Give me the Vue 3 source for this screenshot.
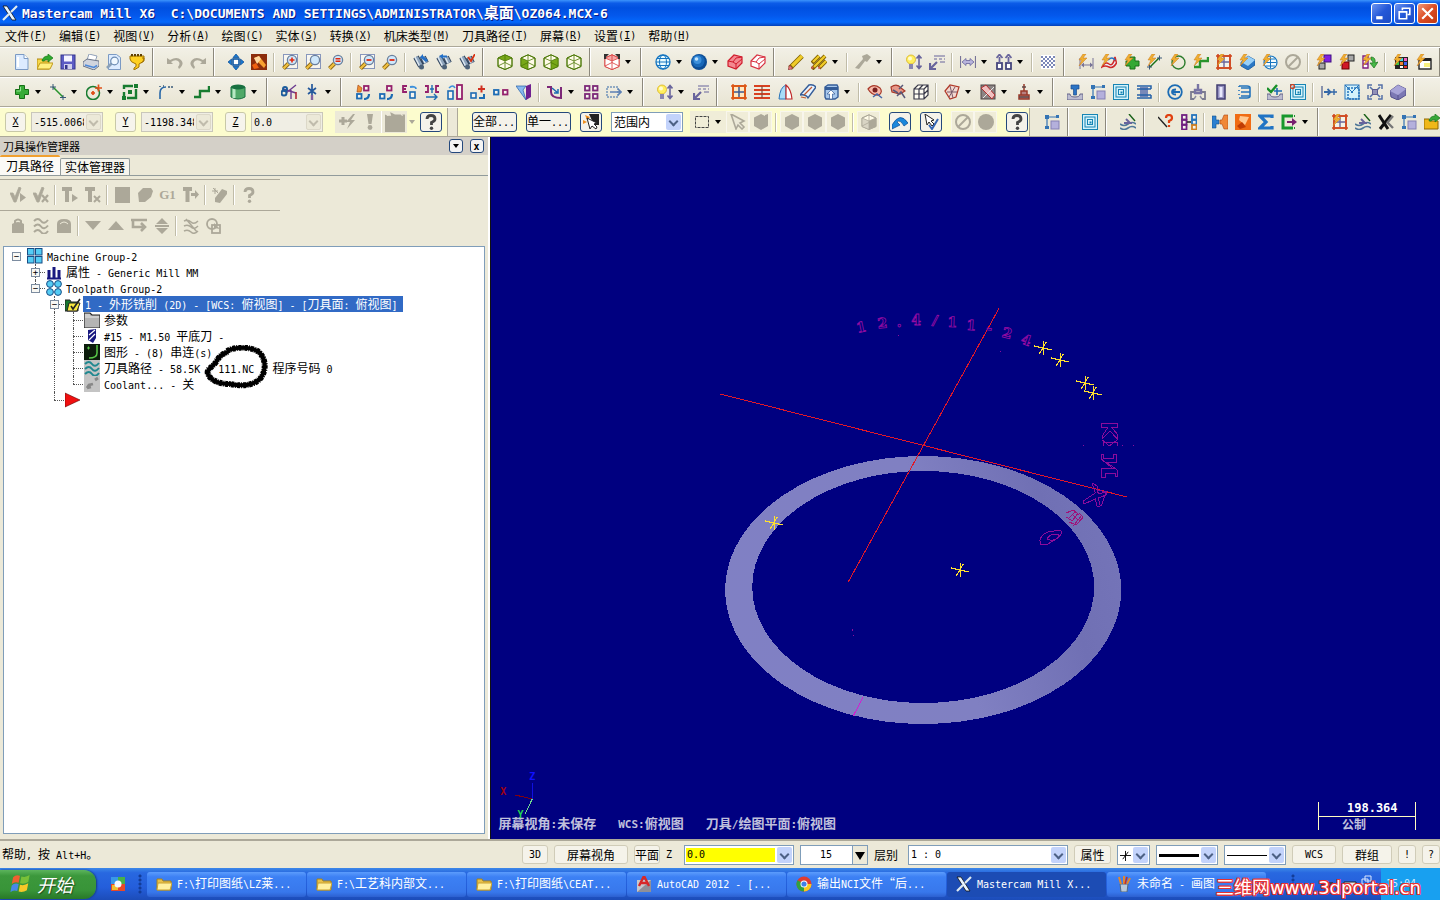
<script setup>
import { h } from 'vue'

// Mixed-script text: CJK at full size, Latin runs in a narrower monospaced face.
const T = ({ s }) =>
  h('span', { class: 'mixed' }, (s.match(/[\x20-\x7e]+|[^\x20-\x7e]+/g) || []).map(run =>
    h('span', { class: run.charCodeAt(0) < 127 ? 'lat' : 'cjk' }, run)))
T.props = ['s']

const p = (d, f = 'none', s = 'none', w = 1) => `<path d="${d}" fill="${f}" stroke="${s}" stroke-width="${w}"/>`
const c = (x, y, r, f = 'none', s = 'none', w = 1) => `<circle cx="${x}" cy="${y}" r="${r}" fill="${f}" stroke="${s}" stroke-width="${w}"/>`
const r = (x, y, w, ht, f = 'none', s = 'none', sw = 1) => `<rect x="${x}" y="${y}" width="${w}" height="${ht}" fill="${f}" stroke="${s}" stroke-width="${sw}"/>`

const GREY = '#aca899'
const bolt = p('M5 0L1 6h3L1 12l8-8H5l3-4z', '#f0b030', '#c87820', 0.5)
const mag = (sign, box) =>
  (box ? `<rect x="1.5" y=".5" width="14" height="14" fill="#fff8" stroke="#1c3c90" stroke-dasharray="1 1"/>` : '') +
  p('M6.5 9.5L1.5 14.5', 'none', '#8a6410', 4) + p('M6.5 9.5L1.5 14.5', 'none', '#f0c040', 2.4) +
  c(10, 6, 4.6, '#cfe8fb', '#6a7f9c', 1.3) +
  ({ plus: p('M7.5 6h5M10 3.5v5', 'none', '#e02810', 1.6), eq: p('M7.5 4.8h5M7.5 7.2h5', 'none', '#e02810', 1.4), minus: p('M7.5 6h5', 'none', '#e02810', 1.8) }[sign] || '')
const bino = extra =>
  p('M3 3l5 9M10 3l3 6', 'none', '#33465e', 6) + p('M3 3l5 9M10 3l3 6', 'none', '#8fa5bd', 4) + p('M2 3l4.500 9M9 3l3 6', 'none', '#dfe9f2', 1.4) + c(8.500, 13, 2.500, '#4c6178') + extra
const cube = (t, l, rt, s, base = '#fffbe8') =>
  p('M8 .8L15 4v8.5L8 15.5 1 12.500V4z', base, s) + (t ? p('M8 .8L15 4 8 7 1 4z', t) : '') + (l ? p('M1 4l7 3v8.500l-7-3z', l) : '') +
  (rt ? p('M15 4L8 7v8.500l7-3z', rt) : '') + p('M8 .8L15 4v8.500L8 15.500 1 12.500V4zM1 4l7 3 7-3M8 7v8.500M8 1v6M1 12l7-3.500 7 3.500', 'none', s, 0.8)
const hex = p('M8 0l7 3.500v8.500L8 16l-7-4V3.500z', GREY)
const nested = r(0.5, 0.5, 15, 15, '#d4f2fa', '#1684b4') + r(3, 3, 10, 10, 'none', '#1684b4') + r(5.500, 5.500, 5, 5, 'none', '#1684b4') + r(7.500, 7.500, 2, 2, '#1684b4')
const sq2 = (x, y, s) => r(x, y, 4.500, 4.500, '#fff8', s, 1.8)
const grid = (s, n = 1.6) => r(2, 2, 12, 12, '#fff6', s, n) + p('M0 2h16M0 14h16M2 0v16M14 0v16', 'none', s, n) + p('M8 3v10M3 8h10', 'none', '#68649c', 1.4)
const bed = p('M0 10h3q0 3 5 3t5-3h3v6H0z', '#bcbcd0', '#66668a')
const arrowUp = p('M13 2v12M10.500 4.500L13 1.500l2.500 3M10.500 11.500l2.500 3 2.500-3', 'none', '#68649c', 1.6)
const bulb = c(5, 5.500, 4.500, '#ffef60', '#d8b020', 0.8) + c(4, 4.500, 2, '#fffbd0') + r(3, 10, 4, 5, '#8a86b0')
const rect2 = p('M3 3h10M3 3v11', 'none', '#3474b4', 1.2) + r(1, 1, 4, 4, '#3474b4') + r(1, 12, 4, 3, '#3474b4') + r(12, 1, 3, 3, '#3474b4') + r(7, 7, 8, 8, '#b4b0dc', '#8480b4')
const helpMark = col => p('M4 5Q4 1.500 8 1.500T12 5Q12 7 8.500 8.500V11', 'none', col, 2.8) + c(8.500, 14.200, 1.700, col)

const I = {
  new: p('M1.500.5h8.500l4 4v11H1.500z', '#dcebff', '#7b9ac4') + p('M10 .5v4h4', '#fff', '#7b9ac4') + p('M4 3v10', 'none', '#fff', 2),
  open: p('M0 5h5l1 2h6v8H0z', '#f8d848', '#b08810') + p('M3 9h13l-3 6H0z', '#fff080', '#c09818') + p('M5 7Q6 2 11 2V0l5 4-5 4V5.500Q8 5.500 7 7z', '#2ea82e', '#187818', 0.7),
  save: r(1, 1, 14, 14, '#5c5cc4', '#34348c') + r(4, 1.500, 8, 6, '#f4f4ff') + r(4, 10, 8, 5, '#d0d0ec') + r(5, 11, 2.500, 4, '#34348c'),
  print: p('M4 6l2-6 8 2-2 6z', '#fff', '#90a0b8') + p('M0 8l4-3 12 2v5l-5 4L0 12z', '#d0d4de', '#6a7488') + p('M2 11l9 2.500 3-2', 'none', '#4c88d8', 1.6),
  preview: p('M2.500.5h8l4 3v12h-12z', '#dcebff', '#7b9ac4') + p('M6 9l-5 5', 'none', '#8aa0b8', 2.600) + c(8.500, 7, 3.800, '#f0f8ff', '#6c8cb4', 1.2),
  cup: p('M1 2h14v3q0 3-5 5v3l-5 3v-2l2-1.500V10Q1 8 1 5z', '#ffd020', '#a07000') + `<path d="M2 1h12" stroke="#604000" stroke-width="2.400" stroke-dasharray="2 1"/>` + p('M13 4h2v3l-3 2', 'none', '#a07000'),
  undo: p('M0 4v6h6L4 8q4-3 7-1t0 6l1 2q6-5 2-9T3 6z', GREY),
  redo: p('M16 4v6h-6l2-2Q8 5 5 7t0 6l-1 2q-6-5-2-9t11 0z', GREY),
  fit: r(5, 5, 6, 6, '#fff', '#0c56a4', 1.6) + p('M8 0l3 3.500H5zM8 16l3-3.500H5zM0 8l3.500-3v6zM16 8l-3.500-3v6z', '#1878d0', '#0a4a94', 0.7),
  repaint: r(0, 0, 16, 16, '#8c2c0c') + p('M3 4l5-2 7 9-2 3z', '#f8a030') + p('M3 4l5-2 2 3-4 5z', '#ffd8a0') + p('M1 11l4-2 3 5-5 1z', '#f06010'),
  zw: mag('plus', 1), zb: mag('', 1), zt: mag('eq'), zo: mag('minus', 1), zoo: mag('minus'),
  b1: bino(p('M7 3l3-3v2l5 4-2 2-5-4H7z', '#2470c8')), b2: bino(p('M3 2l4-2v1.500h4v2H7V5z', '#2470c8')), b3: bino(p('M9 3l3 4 4-7', 'none', '#d83010', 1.800)),
  cTop: cube('#78a818', '', '', '#4c7808'), cFront: cube('', '#78a818', '', '#4c7808'), cRight: cube('', '', '#78a818', '#4c7808'), cIso: cube('', '', '', '#4c7808'),
  gview: cube('#f4a8a8', '#fff', '#fff', '#d83838') + p('M0 0h5L2 3v2H0zM16 0h-5l3 3v2h2z', '#303030'),
  globe: c(8, 8, 7, '#e8fbff', '#1474c0', 1.300) + `<ellipse cx="8" cy="8" rx="3.500" ry="7" fill="none" stroke="#1474c0"/>` + p('M1 8h14M2 4.500h12M2 11.500h12', 'none', '#1474c0'),
  sphere: c(8, 8, 8, '#0c4c94') + c(7.300, 7, 6.300, '#1868b8') + c(6.500, 6, 4, '#3c90dc') + c(5.500, 5, 1.800, '#c4e4fc'),
  redBox: p('M1 7l6-6 8 2v6l-6 6-8-3z', '#f48890', '#d01c2c', 1.200) + p('M1 7l5 1 3-4 6-1M6 8l3 2v5M9 10l6-5', 'none', '#d01c2c'),
  wireBox: p('M1 7l6-6 8 2v6l-6 6-8-3z', '#fff', '#d83040', 1.200) + p('M1 7l5 1 3-4 6-1M6 8l3 2v5M9 10l6-5', 'none', '#d83040'),
  pencil: p('M2 14L14 2', 'none', '#806000', 5) + p('M4 12L14 2', 'none', '#f0cc28', 3.200) + p('M0 16l5-1.500-3.500-3.500z', '#e87878', '#803030', 0.6),
  pencils: p('M1 9l7-7M8 14l7-7M1 15L14 2', 'none', '#806000', 4) + p('M2 8l6-6M9 13l6-6M3 13L14 2', 'none', '#f0cc28', 2.400) + p('M0 15l3-1-2-2zM7 15l3-1-2-2z', '#d85858'),
  greyTool: p('M0 14l8-9-1-3 5-2 4 3-4 5-2-1-6 8z', GREY),
  lamp: bulb + arrowUp,
  dash: p('M1 15L8 8M1 9v6h6', 'none', '#68649c', 2.2) + p('M5 2h11M5 5h3m2 0h3m2 0h1M11 8h5', 'none', '#68649c', 1.200),
  dim: p('M.5 2v12M15.500 2v12', 'none', '#787498', 1.2) + p('M2 8l4-3.500v2h4v-2L14 8l-4 3.500v-2H6v2z', '#b8b4dc', '#68649c', 0.8),
  upup: r(1, 9, 5, 6, '#fff', '#45457c', 1.800) + r(10, 9, 5, 6, '#fff', '#45457c', 1.800) + p('M3.500 9V3M.5 4l3-3.500 3 3.500M12.500 9V3M9.500 4l3-3.500 3 3.500', 'none', '#68649c', 1.800),
  check: r(1, 1, 14, 14, '#fff') + `<path d="M1 3h14M1 7h14M1 11h14" stroke="#7c88b8" stroke-width="2" stroke-dasharray="2 2"/><path d="M3 5h12M3 9h12M3 13h12" stroke="#7c88b8" stroke-width="2" stroke-dasharray="2 2"/>`,
  bDim: p('M2 4v11M15 4v11', 'none', '#787498') + p('M3 11l3-2.500v2h6v-2L15 11l-3 2.500v-2H6v2z', '#787498') + bolt,
  bSurf: p('M1 13Q4 7 8 10t6-7l1.500 6Q12 15 8 13t-7 0z', '#e8f4ff', '#d02828', 1.500) + p('M7 6q4-4 7 0', 'none', '#2874c4', 1.500) + bolt,
  bPlus: p('M6 3h5v4h4v5h-4v3H6v-3H2V7h4z', '#34a834', '#187018') + bolt,
  bLine: p('M3 13L12 4', 'none', '#187018', 1.5) + p('M10 4h5M12.500 1.500v5M0 13h5M2.500 10.500v5', 'none', '#385878', 1) + bolt,
  bCirc: c(8.500, 8.500, 6.500, 'none', '#2c7c2c', 1.400) + bolt,
  bSpl: p('M1 13h6V7h8V3', 'none', '#28942c', 2.400) + bolt,
  bGrid: grid('#d04820') + bolt,
  bBox: p('M2 8l7-6 7 4v5l-7 5-7-4z', '#2c78c4', '#14589c', 0.8) + p('M2 8l7-6 7 4-7 6z', '#98d0f8') + bolt,
  bGlobe: c(8.500, 8.500, 6.500, '#f0fbff', '#1474c0', 1.200) + p('M2.500 8.500h12M8.500 2.500v12M4 5h9M4 12h9', 'none', '#1474c0') + bolt,
  no: c(8, 8, 7, 'none', GREY, 2) + p('M3 13L13 3', 'none', GREY, 2),
  col1: r(8, 1, 7, 7, '#8020e0', '#401080') + r(3, 9, 6, 6, '#a8a8a8', '#222') + bolt,
  col2: r(9, 1, 6, 6, '#a8a8a8', '#222') + r(3, 8, 7, 7, '#d01828', '#600') + bolt,
  col3: p('M1 2h5v12H1zM1 6h5M1 10h5', '#fff', '#802080', 1.400) + p('M9 3q5 0 4 6l3-1-4 6-4-5h3q0-3-2-3z', '#48b848', '#187018', 0.7) + bolt,
  tiles: r(2, 3, 13, 12, '#222') + r(3, 4, 3, 3, '#f8f060') + r(7, 4, 3, 3, '#40d8e8') + r(11, 4, 3, 3, '#f060c0') + r(3, 8, 3, 3, '#40c040') + r(7, 8, 3, 3, '#f08030') + r(11, 8, 3, 3, '#4060f0') + r(7, 12, 3, 2, '#fff') + r(11, 12, 3, 2, '#e03030') + bolt,
  win: r(3, 5, 12, 10, '#fff', '#222', 1.400) + r(3, 4, 12, 3, '#222') + r(8, 9, 6, 4, '#f8f080') + bolt,
  plus: p('M5.500 1.500h5v4h4v5h-4v4h-5v-4h-4v-5h4z', '#38ac38', '#167016') + p('M6.500 3v4h-4', 'none', '#90e090'),
  line: p('M3 3L13 13', 'none', '#28942c', 1.500) + p('M0 3h6M3 0v6M10 13.500h6M13 11v5', 'none', '#385878'),
  circle: c(7, 9, 6.500, 'none', '#187c30', 1.500) + c(7, 9, 1.500, '#d84020') + p('M9 4h7M12.500.5v7M5 9h4M7 7v4', 'none', '#e05018', 1.700),
  rect: p('M2 5V2h9M14 5v9H5M2 8v6h2M14 3v-1', 'none', '#187c30', 2.400) + r(6, 6, 4, 4, '#187c30') + r(0, 12, 4, 4, '#187c30') + r(12, 0, 4, 4, '#187c30'),
  fillet: p('M2 15V9Q2 3 8 3', 'none', '#2868a8', 1.600) + `<path d="M2 2v1M5 2h1M10 3h6" stroke="#385878" stroke-width="1.500" stroke-dasharray="2 1"/>`,
  spline: p('M0 13h6V7h9V2', 'none', '#187c30', 2.400),
  cyl: p('M1 3v10q7 4 14 0V3z', '#50a868', '#187040') + p('M4 4v10', 'none', '#b8e8c4', 3) + `<ellipse cx="8" cy="3" rx="7" ry="2.500" fill="#187040"/>`,
  trim: p('M5 9L15 1M2 5l13 4M10 6v9', 'none', '#6c3c90', 1.400) + c(3, 9, 2.500, 'none', '#1c5c9c', 2) + c(4, 5, 2, 'none', '#1c5c9c', 2) + p('M15 8v7', 'none', '#b02838', 1.600),
  brk: p('M8 0v16M4 4l8 6M12 4l-8 6', 'none', '#24589c', 1.700) + p('M8 11v5', 'none', '#8060a0', 2.4),
  x1: sq2(9, 2, '#94206c') + sq2(2, 10, '#1c6cb4') + p('M9 15q5 0 5-5', 'none', '#1c6cb4', 2.200) + p('M2 8l1-7 4 3-1 4z', '#f09030', '#a04010', 0.6),
  x2: sq2(9, 2, '#94206c') + sq2(2, 10, '#1c6cb4') + p('M9 15q5 0 5-5', 'none', '#1c6cb4', 2.200),
  x3: p('M6 2H2v6h4M2 5h3', 'none', '#94206c', 1.800) + p('M15 5q0-3-6-2', 'none', '#3c90dc', 1.800) + r(9, 8, 5, 6, '#fff8', '#1c6cb4', 1.600),
  x4: p('M1 2h3v6H1M15 2h-3v6h3', 'none', '#94206c', 1.800) + p('M8 1v8M6 5h4M2 13h11M10 10l3 3-3 3', 'none', '#1c6cb4', 1.400),
  x5: r(1, 7, 5, 8, '#fff8', '#1c6cb4', 1.600) + r(10, 1, 5, 14, '#fff8', '#94206c', 1.800) + p('M2 4q4-4 6 0', 'none', '#3c90dc', 1.600),
  x6: r(1, 9, 5, 5, '#fff8', '#1c6cb4', 1.600) + p('M9 14h5v-4', 'none', '#1c6cb4', 2) + p('M8 5h7M11.500 1.500v7', 'none', '#d03020', 2),
  x7: r(1, 6, 4.500, 4.500, '#fff8', '#1c6cb4', 1.800) + r(10, 6, 4.500, 4.500, '#fff8', '#94206c', 1.800),
  x8: p('M0 2h10l-3 4 3 10z', '#88b8f0', '#2460a8', 0.7) + p('M10 2l5-2v13l-5 3z', '#702090'),
  x9: p('M0 3h4v5q0 6 10 6V3', 'none', '#7c2878', 2) + p('M5 4l6 5M11 5v4H7', 'none', '#1c6cb4', 1.500),
  x10: sq2(2, 2, '#7c2878') + sq2(10, 2, '#7c2878') + sq2(2, 10, '#7c2878') + sq2(10, 10, '#7c2878'),
  x11: `<path d="M1 3h11v10H1z" fill="none" stroke="#3468a8" stroke-dasharray="2 1"/>` + p('M4 8h11M12 5l3 3-3 3', 'none', '#5c80b4', 1.600),
  g1: r(2, 2, 12, 12, '#ffe8c0', '#dc5818', 2) + p('M0 2h16M0 14h16M2 0v16M14 0v16', 'none', '#dc5818', 1.400) + p('M8 3v10M3 8h10', 'none', '#3c5890', 1.500),
  g2: p('M0 2h16M0 6h16M0 10h16M0 14h16', 'none', '#d84020', 1.800) + p('M8 2v12', 'none', '#884838', 1.200),
  g3: p('M2 15Q3 3 9 1v14z', '#a8dcf8', '#2c74b8') + p('M9 1q5 4 6 14H9z', '#fff', '#c02828', 1.200),
  g4: p('M0 11L9 1q4-1 7 2L8 14q-2-4-8-3z', '#e8f4ff', '#345c98', 1.400) + p('M4 11l8-8M1 13l5 1', 'none', '#c05830', 1.200),
  g5: p('M2 3l3-2h9l1 2v10l-3 2H3l-1-2z', '#a8c8ec', '#345c98', 1.400) + r(2, 3, 13, 3, '#345c98') + p('M8 6l4 4H9.500v5h-3v-5H4z', '#fff', '#345c98', 0.7),
  s1: p('M1 5q5-6 12-1 3 4-1 7-7 1-11-6z', '#f8b8a8', '#a83828', 1.200) + c(8, 6, 2.500, '#782020') + p('M6 13l4-3 5 4', 'none', '#4868a8', 1.500),
  s2: p('M1 3q6-4 10 1l4 3-5 3-8-2z', '#e89888', '#a83828', 1.200) + p('M9 5l4-4M7 12l4-4 4 6M3 6l5 3', 'none', '#585878', 1.500),
  s3: p('M1 5l4-4h10v10l-4 4H1zM1 5h10v10M11 5l4-4M6 5v10M1 10h10M10 1L6 5M15 6l-4 4', '#fffdf4', '#383848', 1.200),
  s4: p('M1 7l5-6 9 2-3 10-6 2z', '#f4d8d0', '#b03828', 1.200) + p('M3 8h10M6 2l3 12M11 3L5 13', 'none', '#785868'),
  s5: r(1, 1, 14, 14, '#8c8484', '#4c4444') + p('M1 4l5-3 9 10-3 4z', '#f0c0c0', '#b03030') + p('M3 14L14 3', 'none', '#e8e8e8'),
  s6: p('M8 0v7M5 7h6v4H5zM3 11h10v4H3z', '#b88080', '#983828', 1.500) + p('M6 3h4M3 13h10', 'none', '#604848', 1.500),
  m1: bed + p('M4 1h8v4H9.500v6h-3V5H4z', '#2c74c4', '#1c4c8c', 0.7), m2: rect2, m3: nested,
  m4: r(4, 3, 8, 10, '#7888b8') + p('M1 2h14v3M1 5h14M1 11h14M1 14h14V11', 'none', '#2460a8', 1.500),
  m5: c(8, 8, 6.800, 'none', '#1c6cb4', 1.800) + p('M5 8h8M9 5.500q-4 0-4 2.500t4 2.500', 'none', '#1c6cb4', 1.800),
  m6: p('M8 0v6H5v3h6V6H8', 'none', '#7874a4', 2.400) + p('M4 8H1v7h3M12 8h3v7h-3', 'none', '#7c7c90', 1.800) + p('M4 15l2-3M12 15l-2-3', 'none', '#8c8ca0', 1.4),
  m7: r(4, 1, 8, 14, '#9490c0', '#403c70', 1.500) + r(6.500, 3, 3, 10, '#e8e8fc'),
  m8: p('M3 2h8q3 0 3 2H5h9v4H5h9v4H5h9q0 2-3 2H3M3 2v1M3 6v1M3 10v1', 'none', '#2474bc', 1.600),
  m9: bed + p('M0 4l4 4 6-7', 'none', '#189028', 2.400) + p('M10 4v7M7 7h8', 'none', '#1c6cb4', 1.600), m10: nested + c(2.500, 2.500, 2, 'none', '#d04020', 1.300),
  m11: p('M1 2v12', 'none', '#7c88a8', 1.800) + p('M3 8h6M6.500 5L9.500 8l-3 3', 'none', '#3468a8', 1.800) + p('M10 8h6M13 5v6', 'none', '#3468a8', 1.400),
  m12: r(1, 1, 14, 14, '#d4f2fa', '#2474bc') + `<rect x="4" y="4" width="11" height="11" fill="none" stroke="#2474bc" stroke-width="1.500" stroke-dasharray="2 1"/>` + p('M1 1l8 8M15 1L7 9', 'none', '#2474bc'),
  m13: p('M1 5V1h4M11 1h4v4M15 11v4h-4M5 15H1v-4M3 3l3 3M13 3l-3 3M3 13l3-3M13 13l-3-3', 'none', '#5470a8', 1.500) + r(5.500, 5.500, 5, 5, '#9090b8', '#5c5c90'),
  m14: p('M0 7l8-6 8 4v6l-8 5-7-3z', '#7c78b4', '#54508c') + p('M0 7l8-6 8 4-8 6z', '#a8a4d8') + p('M8 11v5', 'none', '#54508c'),
  n1: p('M0 10q4 3 8 0t8 0M0 14q4 3 8 0t8 0', 'none', '#507898', 1.600) + p('M4 9h8M6 5l4 4', 'none', '#68649c', 2) + p('M9 0l6 7', 'none', '#186018', 1.400),
  qLine: p('M0 3l9 10', 'none', '#222', 1.400) + p('M8 4q0-3 3-3t3 3q0 2-3 3v2M11 11v2', 'none', '#e04010', 2.2),
  n2: sq2(1, 1, '#702080') + sq2(1, 6, '#702080') + sq2(1, 11, '#702080') + sq2(11, 1, '#2474bc') + sq2(11, 6, '#2474bc') + sq2(11, 11, '#d08020') + p('M6 8h4', 'none', '#222', 1.500),
  n3: p('M0 2h4v4h3v4H4v4H0z', '#2c80d0', '#14508c', 0.6) + p('M16 1h-4l-2 5H8v4h2l2 5h4z', '#f08838', '#b04810', 0.6),
  n4: r(0, 0, 16, 16, '#f06c14') + p('M5 2l9 1-4 8-6-5z', '#ffc890') + p('M2 12l5-4 4 5-6 2z', '#c03c04'),
  n5: p('M14 4V2H2l6 6-6 6h12v-2', 'none', '#2074c4', 3.2),
  n6: p('M12 2H2v12h10', 'none', '#18982c', 3) + p('M6 7h5V4l5 4-5 4V9H6z', '#782070') + p('M13 2h1M13 14h1', 'none', '#18982c', 2),
  n7: p('M1 1l9 14M13 1L2 15', 'none', '#111', 3) + p('M9 9l6-7M9 8l6 6', 'none', '#777', 2.400),
  fold2: p('M0 5h5l1 2h8v8H0z', '#f0b818', '#906800') + p('M5 7Q6 2 11 2V0l5 4-5 4V5.500Q8 5.500 7 7z', '#38a838', '#187818', 0.7),
  fast: p('M0 7h8M4 3v8', 'none', GREY, 3) + p('M14 0L7 8h4l-3 7 8-9h-4l4-6z', GREY),
  bang: p('M5 0h6l-1.500 10h-3z', GREY) + c(8, 13.500, 2.400, GREY),
  blob: p('M0 2l2 1h3L4 0l4 2h8v14H0z', GREY) + p('M4 0l-2 3M12 0l2 3', 'none', '#ece9d8'),
  help: helpMark('#444'), hexg: hex, hexc: hex + p('M12 1l3-1v4l-3 3z', GREY), disc: c(8, 8, 8, GREY),
  sel: `<rect x="1.500" y="2.500" width="13" height="11" fill="none" stroke="#444" stroke-dasharray="3 1"/>`,
  cur: p('M1 0l5 15 2-4 4 4 2-2-4-4 4-2z', '#ece9d8', GREY, 1.600),
  cubeg: cube('', '#d8d4c4', GREY, GREY),
  uarr: p('M0 11Q8-3 16 9l-4 3Q8 5 5 8l3 3-8 4z', '#1c88dc', '#0c4c94', 0.7),
  curv: p('M2 0l2 11 2-3 3 4 2-2-3-3 3-1z', '#fff', '#222') + p('M6 11l3 4 6-10', 'none', '#3464b4', 2),
  pick: p('M6 0h10v11h-5z', '#222') + p('M2 1l5 2-3 3zM0 6l4 2-4 2z', '#f09020') + p('M4 4l3 11 2-3 4 3 1-2-3-3 3-1z', '#fff', '#222'),
  k1: p('M0 6l3 0 2 4L9 0l2 1-5 14H4z', GREY, GREY, 0.8) + p('M10 6l6 4.500-6 4.500z', GREY), k2: p('M0 6l3 0 2 4L9 0l2 1-5 14H4z', GREY, GREY, 0.8) + p('M9 8l6 7M15 8l-6 7', 'none', GREY, 2.2),
  k3: p('M0 0h10v4H7v11H3V4H0zM10 7l6 4-6 4z', GREY), k4: p('M0 0h10v4H7v11H3V4H0z', GREY) + p('M9 9l6 6M15 9l-6 6', 'none', GREY, 2),
  k5: r(1, 0, 15, 16, GREY), k6: p('M1 6l5-5h8l2 3-2 6-6 5H2z', GREY), k7: p('M0 0h9v4H6.500v11h-4V4H0zM8 6h4V3l4 4.500-4 4.500V9H8z', GREY),
  k8: p('M3 11l7-9 5 2v3l-7 9-5-1z', GREY) + p('M0 4h6M3 1v6M1 1l5 5', 'none', GREY), k9: helpMark(GREY),
  l1: p('M5 6V3q3-3 6 0v3', 'none', GREY, 2) + p('M2 6q6-4 12 0v9H2z', GREY), l2: p('M1 3q4-4 7 0t7-1M1 8.500q4-4 7 0t7-1M1 14q4-4 7 0t7-1', 'none', GREY, 2),
  l3: p('M1 15V6q0-5 7-5t7 5v9z', GREY) + p('M4 6q4-4 8 0', 'none', '#ece9d8'),
  dn: p('M0 3h16L8 12z', GREY), up: p('M0 12h16L8 3z', GREY), ins: p('M0 2h16M2 3v6h10M10 5l4 4-4 4', 'none', GREY, 2.600), ud: p('M8 0l6 6H2zM8 16l6-6H2zM1 7h14v2H1z', GREY),
  l4: p('M1 3q4-2 7 1t7-1M1 8q4-2 7 1t7-1M1 13q4-2 7 1t7-1M3 1l11 13', 'none', GREY, 1.500), l5: c(6, 6, 5, 'none', GREY, 1.800) + r(6, 7, 8, 8, 'none', GREY, 1.800) + p('M8 5l6 6-6-1z', GREY),
  tg: [[1, 1], [9, 1], [1, 9], [9, 9]].map(([x, y]) => r(x - 0.500, y - 0.500, 6.500, 6.500, '#54ccf4', '#184c84')).join(''),
  tb: p('M1 14.500h14', 'none', '#181880', 2) + p('M3 14V6M8 14V3M13 14V6', 'none', '#181880', 3),
  tc: [[4, 4], [12, 4], [4, 12], [12, 12]].map(([x, y]) => c(x, y, 3.400, '#54ccf4', '#184c84')).join(''),
  tf: p('M0 4h5l1 2h7v9H0z', '#187830', '#222') + p('M4 7h11l-3 8H2z', '#f8e840', '#222') + p('M6 10l2 3 7-10', 'none', '#222', 1.600),
  tp: p('M0 1h6l2 2h8v13H0z', '#b4b4b4', '#222', 1.200) + p('M1 3h5M1 5h14', 'none', '#e8e8e8'),
  tt: p('M4 2l8-1v9l-3 5-5-3z', '#181880') + p('M5 7l6-5M5 12l6-6', 'none', '#fff', 1.200),
  tk: r(0, 0, 16, 16, '#0c1c0c') + p('M13 1v8q0 5-8 5', 'none', '#58c848', 1.500) + p('M3 4h3M4.500 2.500v3', 'none', '#58c848'),
  tw: r(0, 0, 16, 16, '#c4c4c4') + p('M1 4q4-4 7 0t7-1M1 9q4-4 7 0t7-1M1 14q4-4 7 0t7-1', 'none', '#208890', 2),
  tz: r(0, 0, 16, 16, '#c4c4c4') + p('M3 12l2-3 4-1M11 4l3-2M3 12l4-1', 'none', '#888', 2.800),
  tr: p('M0 1l15 7-15 7z', '#f01010', '#600', 0.6),
  app: p('M1 1h4l9 14h-4z', '#e8f4ff', '#111', 0.8) + p('M15 1L9 7M7 9l-6 6', 'none', '#dfeaf0', 2.200),
  folder: p('M1 3h5l1 2h8v9H1z', '#e8c048', '#a08020') + p('M2 7h14l-2 7H1z', '#fff0a0', '#c8a030'),
  acad: r(1, 4, 14, 12, '#c8c8cc') + p('M1 16L15 4v12z', '#909098') + p('M3 10L8 0l5 10M5 7h6', 'none', '#d82828', 2.400),
  chrome: c(8, 8, 7.500, '#e03c30') + p('M8 8L1.500 4.200A7.500 7.500 0 0 0 8 15.500z', '#30a040') + p('M8 8h7.500A7.500 7.500 0 0 1 8 15.500z', '#f8c820') + c(8, 8, 3.500, '#fff') + c(8, 8, 2.600, '#4080e8'),
  paint: p('M4 8h8l-1 8H5z', '#b8c8d8', '#506880') + p('M5 8L3 1M8 8V0M11 8l3-6', 'none', '#e08830', 2) + p('M9 8l2-7', 'none', '#c03030', 1.500),
  quick: r(1, 1, 14, 14, '#e84828') + r(1, 1, 7, 7, '#3898e8') + r(8, 1, 7, 7, '#48b048') + r(2, 9, 6, 5, '#f0c030') + c(8, 8, 3.500, '#f4f8ff'),
  flag: p('M3 3q2-2 5-1L7 7Q4 6 2 8z', '#f06030') + p('M9 2.500q3 1 6-1l-1 5q-3 2-6 1z', '#78c038') + p('M2 9q2-2 5-1l-1 5q-3-1-5 1z', '#4888e8') + p('M8 8.500q3 1 6-1l-1 5q-3 2-6 1z', '#f8c828')
}

// '|' is a separator and '>' is a drop-down arrow
const g = s => s.split(' ')
const row1 = [
  g('new open save print preview cup'), g('undo redo'), g('fit repaint | zw zb zt | zo zoo | b1 b2 b3'),
  g('cTop cFront cRight cIso'), g('gview >'), g('globe > sphere > redBox wireBox'), g('pencil pencils > | greyTool >'),
  g('lamp dash | dim > upup > | check'), g('bDim bSurf bPlus bLine bCirc bSpl bGrid bBox bGlobe no | col1 col2 col3 | tiles win')
]
const row2 = [
  g('plus > line > circle > rect > fillet > spline > cyl >'), g('trim brk >'), g('x1 x2 x3 x4 x5 x6 x7 x8 | x9 > x10 x11 >'),
  g('lamp > dash'), g('g1 g2 g3 g4 g5 > | s1 s2 s3 | s4 > s5 > s6 >'), g('m1 m2 m3 m4 | m5 m6 m7 m8 | m9 m10 | m11 m12 m13 m14')
]
const row3 = [g('m2'), g('m3'), g('n1'), g('qLine n2 | n3 n4 n5 n6 >'), g('bGrid n1 n7 m2 fold2')]
const menus = [['文件', 'F'], ['编辑', 'E'], ['视图', 'V'], ['分析', 'A'], ['绘图', 'C'], ['实体', 'S'], ['转换', 'X'], ['机床类型', 'M'], ['刀具路径', 'T'], ['屏幕', 'R'], ['设置', 'I'], ['帮助', 'H']]
const panelRows = [g('k1 k2 | k3 k4 | k5 k6 G1 k7 | k8 | k9'), g('l1 l2 l3 | dn up ins ud | l4 l5')]
const coords = [['X', '-515.0068'], ['Y', '-1198.348'], ['Z', '0.0']]

const tree = [
  { g: ['minus'], i: 'tg', s: 'Machine Group-2' },
  { g: ['', 'plus up down'], i: 'tb', s: '属性 - Generic Mill MM' },
  { g: ['', 'minus up'], i: 'tc', s: 'Toolpath Group-2' },
  { g: ['', '', 'minus up down'], i: 'tf', s: '1 - 外形铣削 (2D) - [WCS: 俯视图] - [刀具面: 俯视图]', on: true },
  { g: ['', '', 'up down', 'up down side'], i: 'tp', s: '参数' },
  { g: ['', '', 'up down', 'up down side'], i: 'tt', s: '#15 - M1.50 平底刀 -' },
  { g: ['', '', 'up down', 'up down side'], i: 'tk', s: '图形 - (8) 串连(s)' },
  { g: ['', '', 'up down', 'up down side'], i: 'tw', s: '刀具路径 - 58.5K - 111.NC - 程序号码 0' },
  { g: ['', '', 'up down', 'up side'], i: 'tz', s: 'Coolant... - 关' },
  { g: ['', '', 'up side'], i: 'tr', s: '' }
]
const isBox = k => k.startsWith('minus') || k.startsWith('plus')
const tasks = [
  ['folder', 'F:\\打印图纸\\LZ莱...'], ['folder', 'F:\\工艺科内部文...'], ['folder', 'F:\\打印图纸\\CEAT...'], ['acad', 'AutoCAD 2012 - [...'],
  ['chrome', '输出NCI文件“后...'], ['app', 'Mastercam Mill X...'], ['paint', '未命名 - 画图']
]
const glyphs = [
  ['1', 861, 327, -12], ['2', 882, 323, -6], ['.', 899, 322, 0], ['4', 916, 320, 0], ['/', 935, 320, 10], ['1', 952, 322, 2], ['1', 971, 325, 4],
  ['-', 989, 328, 8], ['2', 1007, 333, 14], ['4', 1026, 340, 20]
]
const stars = [[1043, 348], [1060, 360], [1085, 383], [1093, 393], [774, 523], [960, 570]]
</script>

<template>
  <div class="screen">
    <header class="title">
      <svg class="ic" viewBox="0 0 16 16" v-html="I.app"></svg>
      <h1><T s="Mastercam Mill X6  C:\DOCUMENTS AND SETTINGS\ADMINISTRATOR\桌面\OZ064.MCX-6" /></h1>
      <button class="wb" aria-label="最小化"><svg viewBox="0 0 16 16"><path d="M3 12h6" stroke="#fff" stroke-width="3" /></svg></button>
      <button class="wb" aria-label="还原"><svg viewBox="0 0 16 16"><path d="M6 5V3h7v6h-2M3 6.500h7V13H3z" fill="none" stroke="#fff" stroke-width="1.500" /></svg></button>
      <button class="wb red" aria-label="关闭"><svg viewBox="0 0 16 16"><path d="M3 3l10 10M13 3L3 13" stroke="#fff" stroke-width="2" /></svg></button>
    </header>

    <nav class="menu">
      <button v-for="m in menus" :key="m[1]"><span>{{ m[0] }}</span><span class="key">(<u>{{ m[1] }}</u>)</span></button>
    </nav>

    <div v-for="(row, n) in [row1, row2]" :key="n" class="bar">
      <div v-for="(grp, k) in row" :key="k" class="grp">
        <template v-for="(it, j) in grp" :key="j">
          <i v-if="it === '|'" class="sep"></i>
          <button v-else-if="it === '>'" class="dd" aria-label="展开"></button>
          <button v-else class="tb" :aria-label="it"><svg class="ic" viewBox="0 0 16 16" v-html="I[it]"></svg></button>
        </template>
      </div>
    </div>

    <div class="bar third">
      <div class="yellow coordbar">
        <template v-for="q in coords" :key="q[0]">
          <button class="axis"><u>{{ q[0] }}</u></button>
          <span class="combo dis coord"><input :value="q[1]" :aria-label="q[0]"><i></i></span>
        </template>
        <button class="tb" aria-label="快速点"><svg class="ic" viewBox="0 0 16 16" v-html="I.fast"></svg></button>
        <button class="tb" aria-label="提示"><svg class="ic" viewBox="0 0 16 16" v-html="I.bang"></svg></button>
        <button class="tb big" aria-label="设置"><svg class="ic" viewBox="0 0 16 16" v-html="I.blob"></svg></button>
        <button class="dd off" aria-label="展开"></button>
        <button class="box" aria-label="帮助"><svg class="ic" viewBox="0 0 16 16" v-html="I.help"></svg></button>
      </div>
      <div class="yellow selbar">
        <button class="box wide"><T s="全部..." /></button>
        <button class="box wide"><T s="单一..." /></button>
        <button class="box" aria-label="选择"><svg class="ic" viewBox="0 0 16 16" v-html="I.pick"></svg></button>
        <span class="combo range"><select aria-label="范围"><option>范围内</option></select><i></i></span>
        <div class="seltools">
          <button class="tb" aria-label="窗选"><svg class="ic" viewBox="0 0 16 16" v-html="I.sel"></svg></button>
          <button class="dd" aria-label="展开"></button>
          <button v-for="it in ['cur', 'hexc']" :key="it" class="tb shade" :aria-label="it"><svg class="ic" viewBox="0 0 16 16" v-html="I[it]"></svg></button>
          <i class="sep"></i>
          <button v-for="n in 3" :key="n" class="tb shade" aria-label="实体"><svg class="ic" viewBox="0 0 16 16" v-html="I.hexg"></svg></button>
          <i class="sep"></i>
          <button class="tb shade" aria-label="背面"><svg class="ic" viewBox="0 0 16 16" v-html="I.cubeg"></svg></button>
        </div>
        <button class="box" aria-label="返回"><svg class="ic" viewBox="0 0 16 16" v-html="I.uarr"></svg></button>
        <button class="box" aria-label="验证"><svg class="ic" viewBox="0 0 16 16" v-html="I.curv"></svg></button>
        <div class="seltools">
          <button class="tb shade" aria-label="取消"><svg class="ic" viewBox="0 0 16 16" v-html="I.no"></svg></button>
          <button class="tb shade" aria-label="确定"><svg class="ic" viewBox="0 0 16 16" v-html="I.disc"></svg></button>
        </div>
        <button class="box" aria-label="帮助"><svg class="ic" viewBox="0 0 16 16" v-html="I.help"></svg></button>
      </div>
      <div v-for="(grp, k) in row3" :key="k" class="grp">
        <template v-for="(it, j) in grp" :key="j">
          <i v-if="it === '|'" class="sep"></i>
          <button v-else-if="it === '>'" class="dd" aria-label="展开"></button>
          <button v-else class="tb" :aria-label="it"><svg class="ic" viewBox="0 0 16 16" v-html="I[it]"></svg></button>
        </template>
      </div>
    </div>

    <main class="work">
      <aside class="panel">
        <div class="cap"><h2>刀具操作管理器</h2><button class="cb" aria-label="菜单"><b></b></button><button class="cb">x</button></div>
        <div class="tabs"><button class="tab on">刀具路径</button><button class="tab">实体管理器</button></div>
        <div v-for="(row, n) in panelRows" :key="n" class="prow">
          <template v-for="(it, j) in row" :key="j">
            <i v-if="it === '|'" class="sep"></i>
            <button v-else-if="it === 'G1'" class="tb g1">G1</button>
            <button v-else class="tb" :aria-label="it"><svg class="ic" viewBox="0 0 16 16" v-html="I[it]"></svg></button>
          </template>
        </div>
        <div class="treebox">
          <ul class="tree">
            <li v-for="(t, n) in tree" :key="n">
              <span v-for="(k, j) in t.g" :key="j" class="guide" :class="k"><b v-if="isBox(k)">{{ k[0] === 'p' ? '+' : '−' }}</b></span>
              <svg class="ic" viewBox="0 0 16 16" v-html="I[t.i]"></svg>
              <span class="lbl" :class="{ on: t.on }"><T :s="t.s" /></span>
            </li>
          </ul>
          <svg class="ink" viewBox="0 0 66 46" fill="none" stroke="#000">
            <path d="M24 6C33 1 49 2 56 7C63 14 63 24 59 31C54 40 40 42 27 39C17 39 8 36 5 29C3 24 10 22 13 17C16 11 21 8 25 7" stroke-width="4" />
            <path d="M24 6C33 1 49 2 56 7C63 14 63 24 59 31C54 40 40 42 27 39C17 39 8 36 5 29C3 24 10 22 13 17C16 11 21 8 25 7" stroke-width="6" stroke-dasharray="3 1 1 1" />
          </svg>
        </div>
      </aside>

      <section class="view">
        <svg class="scene" viewBox="491 137 949 702" preserveAspectRatio="xMidYMid meet">
          <defs>
            <linearGradient id="ring" x1="0" x2="1" y1=".6" y2=".4">
              <stop offset="0" stop-color="#8080c4" /><stop offset=".55" stop-color="#8080c2" /><stop offset=".85" stop-color="#7070b4" /><stop offset="1" stop-color="#7474b8" />
            </linearGradient>
          </defs>
          <path fill="url(#ring)" fill-rule="evenodd" d="M725 590a198 134 0 1 0 396 0a198 134 0 1 0-396 0zM752 587a171 116 0 1 0 342 0a171 116 0 1 0-342 0z" />
          <path d="M720 394L1127 497M999 308L848 582" stroke="#e01828" fill="none" />
          <path d="M853 716l10-19" stroke="#d020d0" />
          <text v-for="(q, n) in glyphs" :key="n" class="engr" text-anchor="middle" :x="q[1]" :y="q[2] + 5" :transform="`rotate(${q[3]} ${q[1]} ${q[2]})`">{{ q[0] }}</text>
          <g fill="none" stroke="#8c0c9c">
            <path d="M1101 423v4h7l-6 9v3l8-8 7 8v-5l-6-7h6v-4zM1117 446v-4l-14 0v4M1102 440l7 6 8-6" />
            <path d="M1101 454v5l11 9h-11v9h4v-4h10v3h2v-6l-11-8h10v-8h-3v4h-10v-4z" />
            <path d="M1092 483l3 10-12 8 1 3 11-5 2 8 3-1-2-8 8-3v-3l-8 2-1-8zM1097 490l9 2-5 14" />
            <path d="M1066 513l7-3 6 5M1066 517l6 4 6-8M1069 522l7 3 7-8-4-4M1072 514l6 6M1073 526l8-10M1068 519l8-8" stroke="#a01078" />
            <path d="M1040 544q-2-8 8-12l12-2q4 3-4 9l-10 6zM1047 539q2-5 8-5t2 4-10 1z" />
          </g>
          <g fill="#8c0c9c"><path d="M852 629h1v2h-1zM853 635h1v1h-1zM1083 445h1v1h-1zM1122 445h1v1h-1zM1133 445h1v1h-1zM898 335h1v1h-1zM1000 351h1v1h-1z" /></g>
          <path v-for="(q, n) in stars" :key="n" :transform="`translate(${q[0]} ${q[1]})`" d="M-9-2L9 2M0-7V7M3-6L-4 6" stroke="#ffe030" stroke-width="1.200" />
          <path d="M532 783v16" stroke="#1010e0" /><path d="M532 799l-17-4" stroke="#800010" /><path d="M532 799l-7 15" stroke="#70d890" />
          <g class="axes"><text x="529" y="780" fill="#1010ff">Z</text><text x="500" y="795" fill="#a00010">X</text></g>
        </svg>
        <div class="note">
          <span><T s="屏幕视角:未保存" /></span><span><T s="WCS:俯视图" /></span><span><T s="刀具/绘图平面:俯视图" /></span>
          <b class="ymark">Y</b>
        </div>
        <div class="scale"><b>198.364</b><span>公制</span></div>
      </section>
    </main>

    <footer class="status">
      <p><T s="帮助, 按 Alt+H。" /></p>
      <button class="sb w26">3D</button>
      <button class="sb w74 cj">屏幕视角</button>
      <button class="sb w26 cj">平面</button>
      <label class="w12" for="z">Z</label>
      <span class="combo w110 yel"><input id="z" value="0.0"><i></i></span>
      <span class="combo w68"><input class="mid" value="15" aria-label="线宽"><em></em></span>
      <label class="w28 cj" for="lv">层别</label>
      <span class="combo w160"><input id="lv" value="1 : 0"><i></i></span>
      <button class="sb w38 cj">属性</button>
      <span class="combo w32"><select aria-label="点型"><option> </option></select><svg viewBox="0 0 12 12"><path d="M0 6h12M6 1v11M9 2L3 10" stroke="#000" fill="none" /></svg><i></i></span>
      <span class="combo w62"><select aria-label="线型"><option> </option></select><u class="thick"></u><i></i></span>
      <span class="combo w62"><select aria-label="线宽度"><option> </option></select><u></u><i></i></span>
      <button class="sb w44">WCS</button>
      <button class="sb w50 cj">群组</button>
      <button class="sb w18">!</button>
      <button class="sb w18">?</button>
    </footer>

    <div class="taskbar">
      <button class="start"><svg viewBox="0 0 16 16" v-html="I.flag"></svg><span>开始</span></button>
      <button class="ql" aria-label="快速启动"><svg class="ic" viewBox="0 0 16 16" v-html="I.quick"></svg></button>
      <i class="dots"></i>
      <button v-for="(t, n) in tasks" :key="n" class="task" :class="{ on: n === 5 }"><svg class="ic" viewBox="0 0 16 16" v-html="I[t[0]]"></svg><T :s="t[1]" /></button>
      <div class="tray">
        <i class="dots"></i>
        <svg viewBox="0 0 60 20"><path d="M3 8h12v7H3z" fill="#333a60" /><path d="M26 8h12v8H26z" fill="#e8e8e8" stroke="#222" /><path d="M44 5h6v5h-6zM47 2h6v5h-6z" fill="none" stroke="#dce8ff" /></svg>
        <span class="clock">15:04</span>
      </div>
      <span class="mark">三维网www.3dportal.cn</span>
    </div>
  </div>
</template>

<style>
body { margin: 0; overflow: hidden; }
.mixed { white-space: pre; }
.mixed .lat { font-family: "DejaVu Sans Mono", monospace; font-size: 10px; }
.title .mixed .lat { font-size: 13px; }
.note .mixed .lat { font-size: 11px; }
</style>

<style scoped>
.screen { height: 100vh; display: flex; flex-direction: column; overflow: hidden; background: #ece9d8; color: #000; font: 12px/16px "Noto Sans CJK SC", sans-serif; }
.screen * { box-sizing: border-box; }
button { padding: 0; margin: 0; border: 0; background: none; font: inherit; color: inherit; flex: none; white-space: nowrap; }
h1, h2, p, ul { margin: 0; padding: 0; }
.ic { width: 16px; height: 16px; flex: none; display: block; }

.title { height: 26px; flex: none; display: flex; align-items: center; gap: 2px; padding: 0 2px; background: linear-gradient(#3c94fc, #0c5ce8 12%, #0050e0 30%, #0458ec 60%, #0468fc 85%, #0440b8); color: #fff; }
.title h1 { flex: 1; font-size: 15px; line-height: 24px; font-weight: bold; padding-left: 2px; text-shadow: 1px 1px #0a1883; }
.wb { width: 21px; height: 21px; border: 1px solid #fff; border-radius: 3px; background: linear-gradient(135deg, #6c94f0, #2458d8 50%, #1c4cc4); }
.wb svg { width: 17px; height: 17px; display: block; margin: 1px; }
.wb.red { background: linear-gradient(135deg, #f09878, #dc4c24 50%, #c03810); }

.menu { height: 21px; flex: none; display: flex; gap: 12px; padding-left: 5px; border-bottom: 1px solid #aca899; }
.menu button { line-height: 19px; display: flex; }
.key { font: 10px/20px "DejaVu Sans Mono", monospace; }

.bar { flex: none; height: 30px; display: flex; overflow: hidden; border-top: 1px solid #fff; border-bottom: 1px solid #aca899; background: linear-gradient(#f2f0e6, #e8e4d2); }
.grp { display: flex; flex: none; align-items: center; padding: 0 4px 0 10px; border-right: 1px solid #8c887c; box-shadow: 1px 0 #fff; }
.grp .tb { height: 24px; }
.tb { width: 23px; height: 22px; display: flex; align-items: center; justify-content: center; }
.sep { width: 2px; height: 19px; margin: 0 3px; flex: none; border-left: 1px solid #c0bca8; border-right: 1px solid #fff; }
.dd { width: 13px; height: 20px; position: relative; }
.dd::before { content: ""; display: block; width: 0; margin: 0 0 0 2px; border: 3px solid transparent; border-top: 4px solid #000; border-bottom: 0; }
.dd.off::before { border-top-color: #aca899; }
.third { background: #ece9d8; }
.yellow { background: #fcfcce; display: flex; align-items: center; flex: none; }
.coordbar { width: 448px; padding-left: 5px; border-right: 1px solid #aca899; }
.axis { width: 21px; height: 20px; background: #f6f4ec; border: 1px solid #c8c8a8; border-radius: 3px; font: 10px/18px "DejaVu Sans Mono", monospace; margin-right: 5px; }
.coord { margin-right: 12px; }
.coordbar .tb { background: #ece9d8; }
.coordbar .big { width: 26px; border-left: 1px solid #fff; }
.big .ic { width: 20px; height: 20px; }
.box { width: 22px; height: 20px; border: 1px solid #24487c; border-radius: 3px; background: #f4f2ea; display: flex; align-items: center; justify-content: center; }
.box.wide { width: 45px; justify-content: flex-start; overflow: hidden; }
.selbar { width: 573px; margin-left: 9px; padding-left: 14px; gap: 9px; border-left: 1px solid #aca899; border-right: 1px solid #aca899; }
.seltools { display: flex; align-items: center; }
.seltools .tb, .seltools .dd { background: #f0edd8; }
.seltools .dd { height: 22px; }
.shade { border: 1px solid #f8f6ec; }
.range { width: 72px; margin-right: -2px; }

.combo { position: relative; display: block; flex: none; height: 20px; border: 1px solid #7f9db9; background: #fff; }
.coord { width: 72px; }
.combo input, .combo select { display: block; width: 100%; height: 100%; border: 0; padding: 0 18px 0 2px; background: none; appearance: none; outline: 0; color: #000; font: 10px/16px "DejaVu Sans Mono", monospace; }
.combo select { font: 12px/16px "Noto Sans CJK SC", sans-serif; }
.combo i { position: absolute; top: 1px; right: 1px; bottom: 1px; width: 15px; background: #c3d3fb; border-radius: 2px; pointer-events: none; }
.combo i::before { content: ""; position: absolute; left: 4px; top: 4px; width: 5px; height: 5px; border: solid #4d6185; border-width: 0 2px 2px 0; transform: rotate(45deg); }
.combo em { position: absolute; top: 0; right: 0; bottom: 0; width: 15px; background: #ece9d8; border-left: 1px solid #7f9db9; pointer-events: none; }
.combo em::before { content: ""; position: absolute; left: 2px; top: 6px; border: 5px solid transparent; border-top: 8px solid #000; border-bottom: 0; }
.combo u { position: absolute; left: 2px; right: 18px; top: 9px; height: 1px; background: #000; pointer-events: none; }
.combo u.thick { top: 8px; height: 3px; }
.combo > svg { position: absolute; left: 2px; top: 4px; width: 11px; height: 11px; pointer-events: none; }
.combo.dis { background: #f0eee4; border-color: #c9c7ba; }
.dis i { background: #ece9d8; border: 1px solid #dcd8c8; }
.dis i::before { border-color: #c0bcac; left: 3px; top: 3px; }
.mid { text-align: center; }
.yel::before { content: ""; position: absolute; left: 1px; top: 2px; bottom: 2px; right: 18px; background: #ff0; }
.yel input { position: relative; }

.work { flex: 1; display: flex; min-height: 0; }
.panel { width: 34%; display: flex; flex-direction: column; background: #ece9d8; border-right: 2px solid #fff; }
.cap { height: 18px; flex: none; display: flex; align-items: center; gap: 7px; padding: 0 4px 0 3px; background: #d4d0c8; }
.cap h2 { flex: 1; font-size: 11px; line-height: 18px; font-weight: 400; }
.cb { width: 14px; height: 14px; border: 1px solid #24487c; border-radius: 3px; background: #f4f4f4; font: bold 10px/11px "DejaVu Sans Mono", monospace; }
.cb b { display: block; width: 0; margin: auto; border: 3px solid transparent; border-top: 4px solid #000; border-bottom: 0; }
.tabs { height: 21px; flex: none; display: flex; align-items: flex-end; border-bottom: 1px solid #919b9c; margin-bottom: 3px; }
.tab { height: 17px; padding: 0 4px; border: 1px solid #919b9c; border-bottom: 0; background: #f6f5ee; border-radius: 2px 2px 0 0; line-height: 16px; }
.tab.on { height: 20px; padding: 0 6px; border: 0; border-top: 2px solid #f0a030; background: #fbfaf6; }
.prow { width: 280px; height: 31px; flex: none; display: flex; align-items: center; padding-left: 6px; border-top: 1px solid #aca899; }
.prow .sep { height: 20px; margin: 0 2px; }
.g1 { font: bold 13px/16px "Liberation Serif", serif; color: #aca899; }
.treebox { flex: 1; margin: 5px 3px 5px 3px; border: 1px solid #7f9db9; background: #fff; position: relative; }
.tree { list-style: none; padding: 1px 0 0 3px; }
.tree li { display: flex; height: 16px; align-items: center; }
.guide { width: 19px; height: 16px; position: relative; flex: none; }
.guide b { position: absolute; z-index: 1; left: 5px; top: 4px; width: 9px; height: 9px; border: 1px solid #7c8ca0; background: #f8f8f4; font: 9px/7px "DejaVu Sans Mono", monospace; text-align: center; }
.guide.up::before { content: ""; position: absolute; left: 9px; top: 0; height: 8px; border-left: 1px dotted #555; }
.guide.up.down::before { height: 16px; }
.guide.side::after, .guide.up.minus::after, .guide.up.plus::after { content: ""; position: absolute; left: 9px; top: 8px; width: 10px; border-top: 1px dotted #555; }
.tree .ic { margin-left: 1px; }
.lbl { margin-left: 2px; padding: 0 2px; line-height: 16px; height: 16px; }
.lbl.on { background: #316ac5; color: #fff; padding-right: 5px; }
.ink { position: absolute; left: 199px; top: 98px; width: 66px; height: 46px; }

.view { flex: 1; position: relative; background: #000080; border-left: 1px solid #111; min-width: 0; overflow: hidden; }
.scene { display: block; width: 100%; height: 100%; shape-rendering: crispEdges; }
.engr { font: bold 14px "DejaVu Serif", serif; fill: #000080; stroke: #980ca4; stroke-width: 0.8px; shape-rendering: auto; }
.axes { font: bold 10px "DejaVu Sans Mono", monospace; }
.note { position: absolute; left: 8px; bottom: 6px; display: flex; gap: 22px; font-size: 13px; line-height: 16px; font-weight: bold; color: #c0c0dc; }
.ymark { position: absolute; left: 19px; top: -8px; color: #20d850; font: bold 10px/16px "DejaVu Sans Mono", monospace; }
.scale { position: absolute; right: 24px; bottom: 9px; width: 98px; height: 28px; border: solid #fffcc0; border-width: 0 1px; display: flex; flex-direction: column; color: #c0c0dc; font-weight: bold; line-height: 14px; }
.scale b { border-bottom: 1px solid #fffcc0; color: #fff; font: bold 12px/12px "DejaVu Sans Mono", monospace; padding-left: 28px; padding-bottom: 2px; }
.scale span { padding-left: 23px; line-height: 14px; }

.status { height: 29px; flex: none; display: flex; align-items: center; gap: 6px; border-top: 2px solid #aca899; background: #ece9d8; font: 10px/16px "DejaVu Sans Mono", monospace; overflow: hidden; }
.status p { flex: 1; padding-left: 2px; font: 12px/16px "Noto Sans CJK SC", sans-serif; }
.status label, .sb { flex: none; }
.sb { height: 19px; border: 1px solid #d0ccb8; border-radius: 3px; background: #f5f3ea; text-align: center; overflow: hidden; }
.cj { font: 12px/16px "Noto Sans CJK SC", sans-serif; }
.w12 { width: 12px; } .w18 { width: 18px; } .w26 { width: 26px; } .w28 { width: 28px; } .w32 { width: 33px; } .w38 { width: 37px; } .w44 { width: 44px; } .w50 { width: 50px; }
.w62 { width: 62px; } .w68 { width: 68px; } .w74 { width: 74px; } .w110 { width: 110px; } .w160 { width: 160px; }

.taskbar { height: 32px; flex: none; display: flex; align-items: center; position: relative; background: linear-gradient(#3c88e8, #2868e0 15%, #245edb 60%, #1c4cb8); color: #fff; }
.start { width: 96px; height: 29px; display: flex; align-items: center; gap: 6px; padding-left: 9px; border-radius: 0 12px 12px 0; background: linear-gradient(#5cb45c, #3c983c 20%, #389438 70%, #287828); box-shadow: 1px 0 2px #143c80; }
.start svg { width: 22px; height: 22px; }
.start span { font-size: 18px; line-height: 26px; font-style: italic; text-shadow: 1px 1px 1px #204c20; }
.ql { width: 42px; padding-left: 14px; }
.dots { width: 4px; height: 20px; margin-right: 5px; background: radial-gradient(circle, #123c98 1px, transparent 2px) 0 0 / 4px 4px; }
.task { width: 159px; height: 25px; margin-right: 1px; padding-left: 9px; display: flex; align-items: center; gap: 5px; border-radius: 3px; background: linear-gradient(#5c9cfc, #3c80f4 20%, #3878ec 80%, #2c60d0); overflow: hidden; }
.task.on { background: #1c4cb4; }
.tray { flex: 1; height: 100%; display: flex; align-items: center; padding-left: 24px; background: linear-gradient(90deg, transparent 114px, #18a0f0 114px); }
.tray svg { width: 60px; height: 20px; margin: 0 8px 0 18px; }
.clock { font: 10px/16px "DejaVu Sans Mono", monospace; color: #d4ecff; }
.mark { position: absolute; right: 19px; bottom: 2px; font: 18px/20px "DejaVu Sans", "Noto Sans CJK SC", sans-serif; color: #fff; text-shadow: 1px 0 #e83030, -1px 0 #e83030, 0 1px #e83030, 0 -1px #e83030, 1px 1px #e83030, -1px -1px #e83030, 1px -1px #e83030, -1px 1px #e83030; }
</style>
